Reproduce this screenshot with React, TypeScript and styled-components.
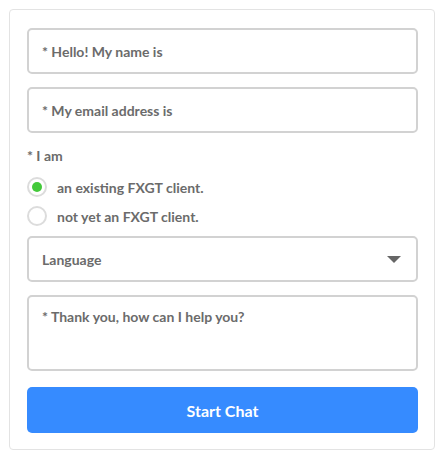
import React from "react";
import styled, { createGlobalStyle } from "styled-components";

const Global = createGlobalStyle`
  html, body { margin: 0; padding: 0; background: #fff; }
  body { font-family: Lato, "Open Sans", sans-serif; }
  * { box-sizing: border-box; }
`;

const Page = styled.div`
  padding: 9px;
  width: 445px;
`;

const Card = styled.form`
  width: 426px;
  border: 1px solid #e3e3e3;
  border-radius: 4px;
  padding: 18px 16px 16px 17px;
  display: flex;
  flex-direction: column;
  background: #fff;
`;

const Field = styled.div<{ $h: number; $top?: boolean; $gapTop?: number }>`
  height: ${(p) => p.$h}px;
  border: 2px solid #d2d2d2;
  border-radius: 5px;
  padding: ${(p) => (p.$top ? "11px 13px" : "0 13px")};
  display: flex;
  align-items: ${(p) => (p.$top ? "flex-start" : "center")};
  justify-content: space-between;
  font-weight: 700;
  font-size: 14px;
  color: #6b6b6b;
  margin-top: ${(p) => p.$gapTop ?? 0}px;
  margin-bottom: 13px;
`;

const Label = styled.div`
  font-weight: 700;
  font-size: 14px;
  color: #6b6b6b;
  line-height: 17px;
  margin-top: 1px;
  margin-bottom: 13px;
`;

const RadioRow = styled.label`
  display: flex;
  align-items: center;
  gap: 10px;
  font-weight: 700;
  font-size: 14px;
  color: #6b6b6b;
  height: 20px;
  margin-bottom: 9px;
`;

const RadioCircle = styled.span<{ $on?: boolean }>`
  width: 20px;
  height: 20px;
  border-radius: 50%;
  border: 2px solid #dcdcdc;
  display: flex;
  align-items: center;
  justify-content: center;
  &::after {
    content: "";
    width: 10px;
    height: 10px;
    border-radius: 50%;
    background: ${(p) => (p.$on ? "#43c93a" : "transparent")};
  }
`;

const Caret = styled.span`
  width: 0;
  height: 0;
  border-left: 7px solid transparent;
  border-right: 7px solid transparent;
  border-top: 7px solid #666;
  margin-right: 2px;
`;

const Button = styled.button`
  height: 46px;
  border: none;
  border-radius: 5px;
  background: #368bff;
  color: #fff;
  font-family: Lato, sans-serif;
  font-weight: 700;
  font-size: 16px;
  margin-top: 3px;
`;

export default function App() {
  return (
    <Page>
      <Global />
      <Card onSubmit={(e) => e.preventDefault()}>
        <Field $h={46}>* Hello! My name is</Field>
        <Field $h={46}>* My email address is</Field>
        <Label>* I am</Label>
        <RadioRow>
          <RadioCircle $on />
          an existing FXGT client.
        </RadioRow>
        <RadioRow>
          <RadioCircle />
          not yet an FXGT client.
        </RadioRow>
        <Field $h={46} $gapTop={1}>
          Language
          <Caret />
        </Field>
        <Field $h={76} $top>
          * Thank you, how can I help you?
        </Field>
        <Button type="submit">Start Chat</Button>
      </Card>
    </Page>
  );
}
